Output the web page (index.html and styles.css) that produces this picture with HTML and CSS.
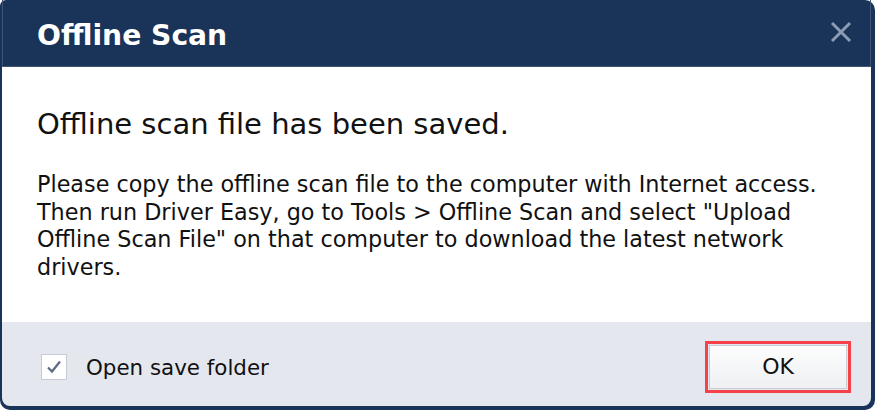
FILE: index.html
```html
<!DOCTYPE html>
<html lang="en">
  <head>
    <meta charset="UTF-8" />
    <title>Offline Scan</title>
    <link rel="stylesheet" href="styles.css">
  </head>
  <body>
    <div class="window">
      <header class="titlebar">
        <h1>Offline Scan</h1>
        <span class="close">
          <svg width="22" height="22" viewBox="0 0 22 22">
            <path d="M2 2 L20 20 M20 2 L2 20" stroke="#8d9bb3" stroke-width="3" />
          </svg>
        </span>
      </header>

      <!-- message -->
      <main class="content">
        <h2>Offline scan file has been saved.</h2>
        <p>
          Please copy the offline scan file to the computer with Internet access.<br />
          Then run Driver Easy, go to Tools &gt; Offline Scan and select "Upload<br />
          Offline Scan File" on that computer to download the latest network<br />
          drivers.
        </p>
      </main>

      <footer class="actions">
        <label class="check">
          <span class="box">
            <svg width="16" height="14" viewBox="0 0 16 14">
              <path d="M2 7.5 L6 11.5 L14 1.5" fill="none" stroke="#5a6b82" stroke-width="2.2" />
            </svg>
          </span>
          Open save folder
        </label>
        <div class="ok-wrap">
          <button class="ok">OK</button>
        </div>
      </footer>
    </div>
  </body>
</html>
```
FILE: styles.css
```css
html,
body {
  margin: 0;
  background: #fff;
}
body {
  font-family: "DejaVu Sans", "Noto Sans", sans-serif;
  color: #111;
}
.window {
  width: 875px;
  height: 410px;
  box-sizing: border-box;
  background: #1a3359;
  border-radius: 6px 10px 10px 10px;
  padding: 0 4px 4px 2px;
  display: flex;
  flex-direction: column;
}
.titlebar {
  height: 67px;
  box-sizing: border-box;
  border: 1px solid #3e5578;
  border-top: none;
  display: flex;
  align-items: center;
  justify-content: space-between;
  padding: 0 18px 0 34px;
}
.titlebar h1 {
  margin: 0;
  color: #fff;
  font-size: 28.2px;
  font-weight: 700;
  margin-top: 4px;
}
.close {
  display: flex;
  margin-top: -2px;
}
.content {
  background: #fff;
  height: 255px;
  padding: 0 35px;
  white-space: nowrap;
}
.content h2 {
  margin: 0;
  padding-top: 40px;
  font-size: 29px;
  font-weight: 400;
  line-height: 34px;
}
.content p {
  margin: 30px 0 0;
  font-size: 22.3px;
  line-height: 27.7px;
}
.actions {
  flex: 1;
  background: #e4e8ee;
  border-radius: 0 0 8px 8px;
  display: flex;
  align-items: center;
  justify-content: space-between;
  padding: 6px 20px 0 39px;
}
.check {
  display: flex;
  align-items: center;
  gap: 19px;
  font-size: 21.4px;
}
.box {
  width: 24px;
  height: 24px;
  background: #fff;
  border: 1px solid #c5ccd6;
  display: flex;
  align-items: center;
  justify-content: center;
}
.ok-wrap {
  border: 3px solid #f4414a;
  padding: 1px;
  margin-top: -1px;
}
.ok {
  width: 138px;
  height: 44px;
  font-family: inherit;
  font-size: 22px;
  color: #111;
  background: linear-gradient(#fdfdfd, #eef0f2);
  border: 1px solid #c8cdd4;
  padding: 0;
}
```
